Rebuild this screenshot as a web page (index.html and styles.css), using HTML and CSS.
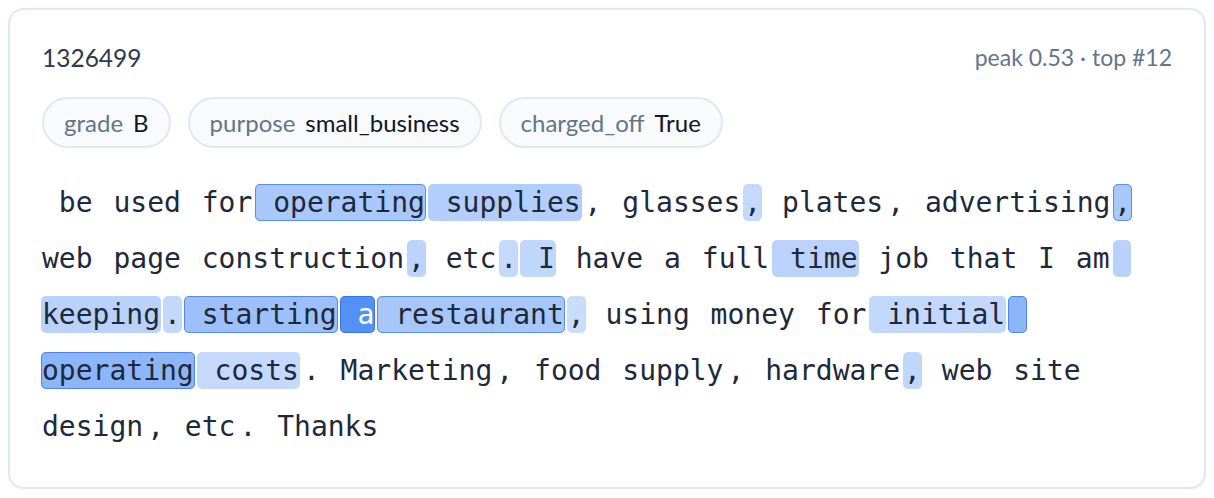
FILE: index.html
```html
<!doctype html>
<html lang="en">
  <head>
    <meta charset="UTF-8" />
    <meta name="viewport" content="width=device-width, initial-scale=1.0" />
    <title>Token Activations</title>
    <link rel="stylesheet" href="styles.css">
  </head>
  <body>
    <div class="card">
      <div class="card-header">
        <span class="doc-id">1326499</span>
        <span class="doc-meta">peak 0.53 · top #12</span>
      </div>

      <div class="chips">
        <div class="chip"><span class="chip-key">grade</span><span class="chip-val">B</span></div>
        <div class="chip"><span class="chip-key">purpose</span><span class="chip-val">small_business</span></div>
        <div class="chip"><span class="chip-key">charged_off</span><span class="chip-val">True</span></div>
      </div>

      <p class="tokens" id="tokens"></p>
    </div>

    <script>
      // [text, activation, in top-k]
      const tokens = [
        [" be", 0], [" used", 0], [" for", 0], [" operating", 0.44, true],
        [" supplies", 0.39], [",", 0], [" glasses", 0], [",", 0.3],
        [" plates", 0], [",", 0], [" advertising", 0], [",", 0.43, true],
        [" web", 0], [" page", 0], [" construction", 0], [",", 0.34],
        [" etc", 0], [".", 0.3], [" I", 0.32], [" have", 0], [" a", 0],
        [" full", 0], [" time", 0.35], [" job", 0], [" that", 0], [" I", 0],
        [" am", 0], [" keeping", 0.36], [".", 0.31], [" starting", 0.5, true],
        [" a", 0.88, true], [" restaurant", 0.45, true], [",", 0.28],
        [" using", 0], [" money", 0], [" for", 0], [" initial", 0.31],
        [" operating", 0.59, true], [" costs", 0.3], [".", 0],
        [" Marketing", 0], [",", 0], [" food", 0], [" supply", 0], [",", 0],
        [" hardware", 0], [",", 0.32], [" web", 0], [" site", 0],
        [" design", 0], [",", 0], [" etc", 0], [".", 0], [" Thanks", 0],
      ];

      const box = document.getElementById("tokens");

      tokens.forEach(([text, act, top]) => {
        const span = document.createElement("span");
        span.className = "tok";
        span.textContent = text;
        if (act > 0) {
          span.style.background = `rgba(59, 130, 246, ${act})`;
        }
        if (top) span.classList.add("top");
        if (act > 0.7) span.classList.add("hot");
        box.appendChild(span);
      });
    </script>
  </body>
</html>
```

FILE: styles.css
```css
body {
  margin: 8px;
  background: #ffffff;
  font-family: Lato, "Noto Sans", sans-serif;
  color: #1e293b;
}

.card {
  border: 2px solid #e2e8f0;
  border-radius: 16px;
  padding: 32px 32px 32px;
  background: #ffffff;
  box-shadow: 0 1px 3px rgba(15, 23, 42, 0.06);
}

.card-header {
  display: flex;
  justify-content: space-between;
  align-items: center;
  height: 30px;
}

.doc-id {
  font-size: 24.5px;
  color: #2d3a4f;
}

.doc-meta {
  font-size: 23px;
  color: #64748b;
}

.chips {
  display: flex;
  gap: 17px;
  margin-top: 25px;
}

.chip {
  display: flex;
  gap: 10px;
  padding: 10px 20px;
  line-height: 27px;
  font-size: 24px;
  background: #f8fafc;
  border: 2px solid #e2e8f0;
  border-radius: 999px;
}

.chip-key {
  color: #64748b;
}

.chip-val {
  color: #0f172a;
}

.tokens {
  margin: 27px 0 0 -2px;
  font-family: "DejaVu Sans Mono", monospace;
  font-size: 28px;
  line-height: 56px;
  white-space: pre-wrap;
  color: #1e293b;
}

.tok {
  margin: 0 1px;
  padding: 1px 0;
  border: 1px solid transparent;
  border-radius: 5px;
  -webkit-box-decoration-break: clone;
  box-decoration-break: clone;
}

.tok.top {
  border-color: rgba(37, 99, 235, 0.6);
}

.tok.hot {
  color: #ffffff;
}
```
